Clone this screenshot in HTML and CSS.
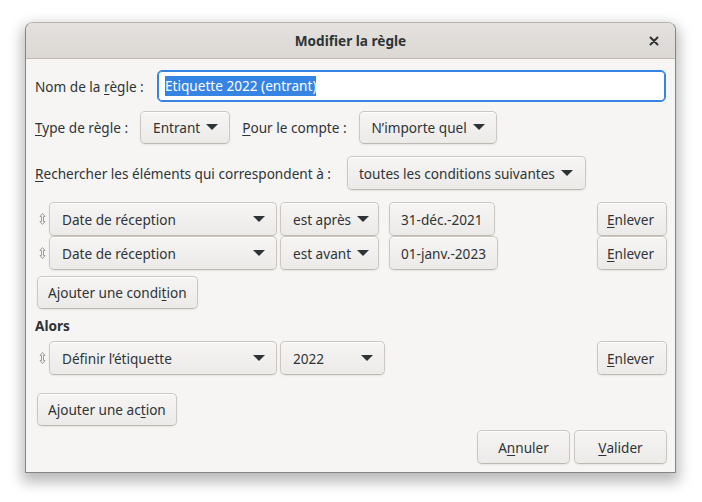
FILE: index.html
```html
<!DOCTYPE html>
<html lang="fr">

<head>
    <meta charset="UTF-8">
    <title>Modifier la règle</title>
    <link rel="stylesheet" href="styles.css">
</head>

<body>

    <div class="dialog">
        <!-- Title bar -->
        <div class="titlebar">
            <span class="title">Modifier la règle</span>
            <button class="close-btn" title="Fermer">
                <svg width="10" height="10" viewBox="0 0 10 10">
                    <path d="M1.5 1.5 L8.5 8.5 M8.5 1.5 L1.5 8.5" stroke="#2e3436" stroke-width="2" stroke-linecap="round" />
                </svg>
            </button>
        </div>

        <div class="content">
            <!-- Rule name -->
            <div class="row name-row">
                <label>Nom de la <u>r</u>ègle :</label>
                <div class="entry"><span class="selected">Etiquette 2022 (entrant)</span></div>
            </div>

            <!-- Rule type / account -->
            <div class="row type-row">
                <label><u>T</u>ype de règle :</label>
                <button class="btn combo">Entrant<i class="arrow"></i></button>
                <label class="second-label"><u>P</u>our le compte :</label>
                <button class="btn combo">N’importe quel<i class="arrow"></i></button>
            </div>

            <!-- Match mode -->
            <div class="row search-row">
                <label><u>R</u>echercher les éléments qui correspondent à :</label>
                <button class="btn combo">toutes les conditions suivantes<i class="arrow"></i></button>
            </div>

            <!-- Conditions -->
            <div class="rule-list">
                <div class="rule">
                    <span class="handle"><svg width="7" height="12" viewBox="0 0 7 12"><path d="M3.5 0.5 L6 3.5 H4.5 V8.5 H6 L3.5 11.5 L1 8.5 H2.5 V3.5 H1 Z" fill="none" stroke="#9a9b9b" stroke-width="1" stroke-linejoin="round" /></svg></span>
                    <button class="btn combo wide">Date de réception<i class="arrow"></i></button>
                    <button class="btn combo op">est après<i class="arrow"></i></button>
                    <button class="btn date">31-déc.-2021</button>
                    <button class="btn remove"><u>E</u>nlever</button>
                </div>
                <div class="rule">
                    <span class="handle"><svg width="7" height="12" viewBox="0 0 7 12"><path d="M3.5 0.5 L6 3.5 H4.5 V8.5 H6 L3.5 11.5 L1 8.5 H2.5 V3.5 H1 Z" fill="none" stroke="#9a9b9b" stroke-width="1" stroke-linejoin="round" /></svg></span>
                    <button class="btn combo wide">Date de réception<i class="arrow"></i></button>
                    <button class="btn combo op">est avant<i class="arrow"></i></button>
                    <button class="btn date">01-janv.-2023</button>
                    <button class="btn remove"><u>E</u>nlever</button>
                </div>
            </div>

            <div class="row add-row">
                <button class="btn">Ajouter une condi<u>t</u>ion</button>
            </div>

            <div class="section-title">Alors</div>

            <!-- Actions -->
            <div class="rule-list action-list">
                <div class="rule">
                    <span class="handle"><svg width="7" height="12" viewBox="0 0 7 12"><path d="M3.5 0.5 L6 3.5 H4.5 V8.5 H6 L3.5 11.5 L1 8.5 H2.5 V3.5 H1 Z" fill="none" stroke="#9a9b9b" stroke-width="1" stroke-linejoin="round" /></svg></span>
                    <button class="btn combo wide">Définir l’étiquette<i class="arrow"></i></button>
                    <button class="btn combo value">2022<i class="arrow"></i></button>
                    <button class="btn remove"><u>E</u>nlever</button>
                </div>
            </div>

            <div class="row add-action-row">
                <button class="btn">Ajouter une ac<u>t</u>ion</button>
            </div>

            <!-- Dialog buttons -->
            <div class="row footer">
                <button class="btn footer-btn">A<u>n</u>nuler</button>
                <button class="btn footer-btn"><u>V</u>alider</button>
            </div>
        </div>
    </div>

</body>

</html>
```

FILE: styles.css
```css
html,
body {
    height: 100%;
}

body {
    margin: 0;
    padding-top: 22px;
    box-sizing: border-box;
    background-color: #ffffff;
    font-family: "Noto Sans", "DejaVu Sans", sans-serif;
    font-size: 13.6px;
    color: #2e3436;
}

u {
    text-decoration-thickness: 1px;
    text-underline-offset: 2px;
}

/* Dialog window */
.dialog {
    margin-left: 25px;
    width: 651px;
    height: 451px;
    box-sizing: border-box;
    background-color: #f6f5f4;
    border: 1px solid #858583;
    border-top-color: #b7b3af;
    border-radius: 8px 8px 0 0;
    box-shadow: 0 6px 14px 3px rgba(0, 0, 0, 0.28);
    display: flex;
    flex-direction: column;
}

.titlebar {
    height: 36px;
    flex-shrink: 0;
    box-sizing: border-box;
    background: linear-gradient(to top, #dcd8d4, #e4e1de);
    border-bottom: 1px solid #c0b9b2;
    border-radius: 7px 7px 0 0;
    display: flex;
    align-items: center;
    justify-content: center;
    position: relative;
}

.title {
    font-weight: bold;
    font-size: 13.6px;
}

.close-btn {
    position: absolute;
    right: 12px;
    top: 9px;
    width: 18px;
    height: 18px;
    border: none;
    background: none;
    padding: 0;
    display: flex;
    align-items: center;
    justify-content: center;
}

.content {
    padding: 11px 8px 0 9px;
    display: flex;
    flex-direction: column;
}

.row {
    display: flex;
    align-items: center;
}

/* Buttons */
.btn {
    font-family: inherit;
    font-size: inherit;
    color: #2e3436;
    height: 34px;
    box-sizing: border-box;
    padding: 0 10px;
    border: 1px solid #cdc7c2;
    border-bottom-color: #bfb8b1;
    border-radius: 5px;
    background: linear-gradient(to top, #edebe9 2px, #f6f5f4);
    box-shadow: inset 0 1px rgba(255, 255, 255, 0.8), 0 1px 2px rgba(0, 0, 0, 0.07);
    display: inline-flex;
    align-items: center;
    white-space: nowrap;
}

.combo {
    padding: 0 11px 0 12px;
}

.arrow {
    display: inline-block;
    width: 0;
    height: 0;
    margin-left: 6px;
    border-left: 6px solid transparent;
    border-right: 6px solid transparent;
    border-top: 6px solid #2e3436;
}

/* Name row */
.name-row {
    height: 32px;
}

.name-row label {
    width: 122px;
    flex-shrink: 0;
}

.entry {
    flex: 1;
    height: 32px;
    box-sizing: border-box;
    margin-right: 1px;
    background-color: #ffffff;
    border: 1px solid #3584e4;
    box-shadow: inset 0 0 0 1px #3584e4;
    border-radius: 5px;
    padding: 0 7px;
    display: flex;
    align-items: center;
}

.selected {
    background-color: #3584e4;
    color: #ffffff;
    line-height: 20px;
}

/* Type row */
.type-row {
    margin-top: 9px;
    height: 32px;
}

.type-row .btn {
    height: 33px;
}

.type-row label {
    margin-right: 12px;
}

.second-label {
    margin-left: 12px;
}

.search-row {
    margin-top: 13px;
}

.search-row label {
    margin-right: 16px;
}

.search-row .combo {
    padding: 0 12px 0 11px;
}

/* Condition and action rows */
.rule-list {
    margin-top: 12px;
    display: flex;
    flex-direction: column;
    gap: 0;
}

.rule {
    display: flex;
    align-items: center;
    height: 34px;
}

.handle {
    width: 14px;
    display: flex;
    justify-content: center;
}

.wide {
    width: 228px;
    justify-content: space-between;
    margin-right: 3px;
}

.op {
    width: 99px;
    margin-right: 10px;
}

.value {
    width: 105px;
    justify-content: space-between;
}

.date {
    padding: 0 11px;
}

.remove {
    margin-left: auto;
    padding: 0 9px;
    width: 70px;
}

.add-row {
    margin-top: 6px;
    padding-left: 2px;
}

.add-row .btn,
.add-action-row .btn {
    height: 33px;
}

.section-title {
    font-weight: bold;
    margin-top: 6px;
    height: 21px;
    line-height: 21px;
}

.action-list {
    margin-top: 5px;
}

.add-action-row {
    margin-top: 18px;
    padding-left: 2px;
}

.footer {
    margin-top: 4px;
    justify-content: flex-end;
    gap: 4px;
}

.footer-btn {
    width: 93px;
    justify-content: center;
}
```
